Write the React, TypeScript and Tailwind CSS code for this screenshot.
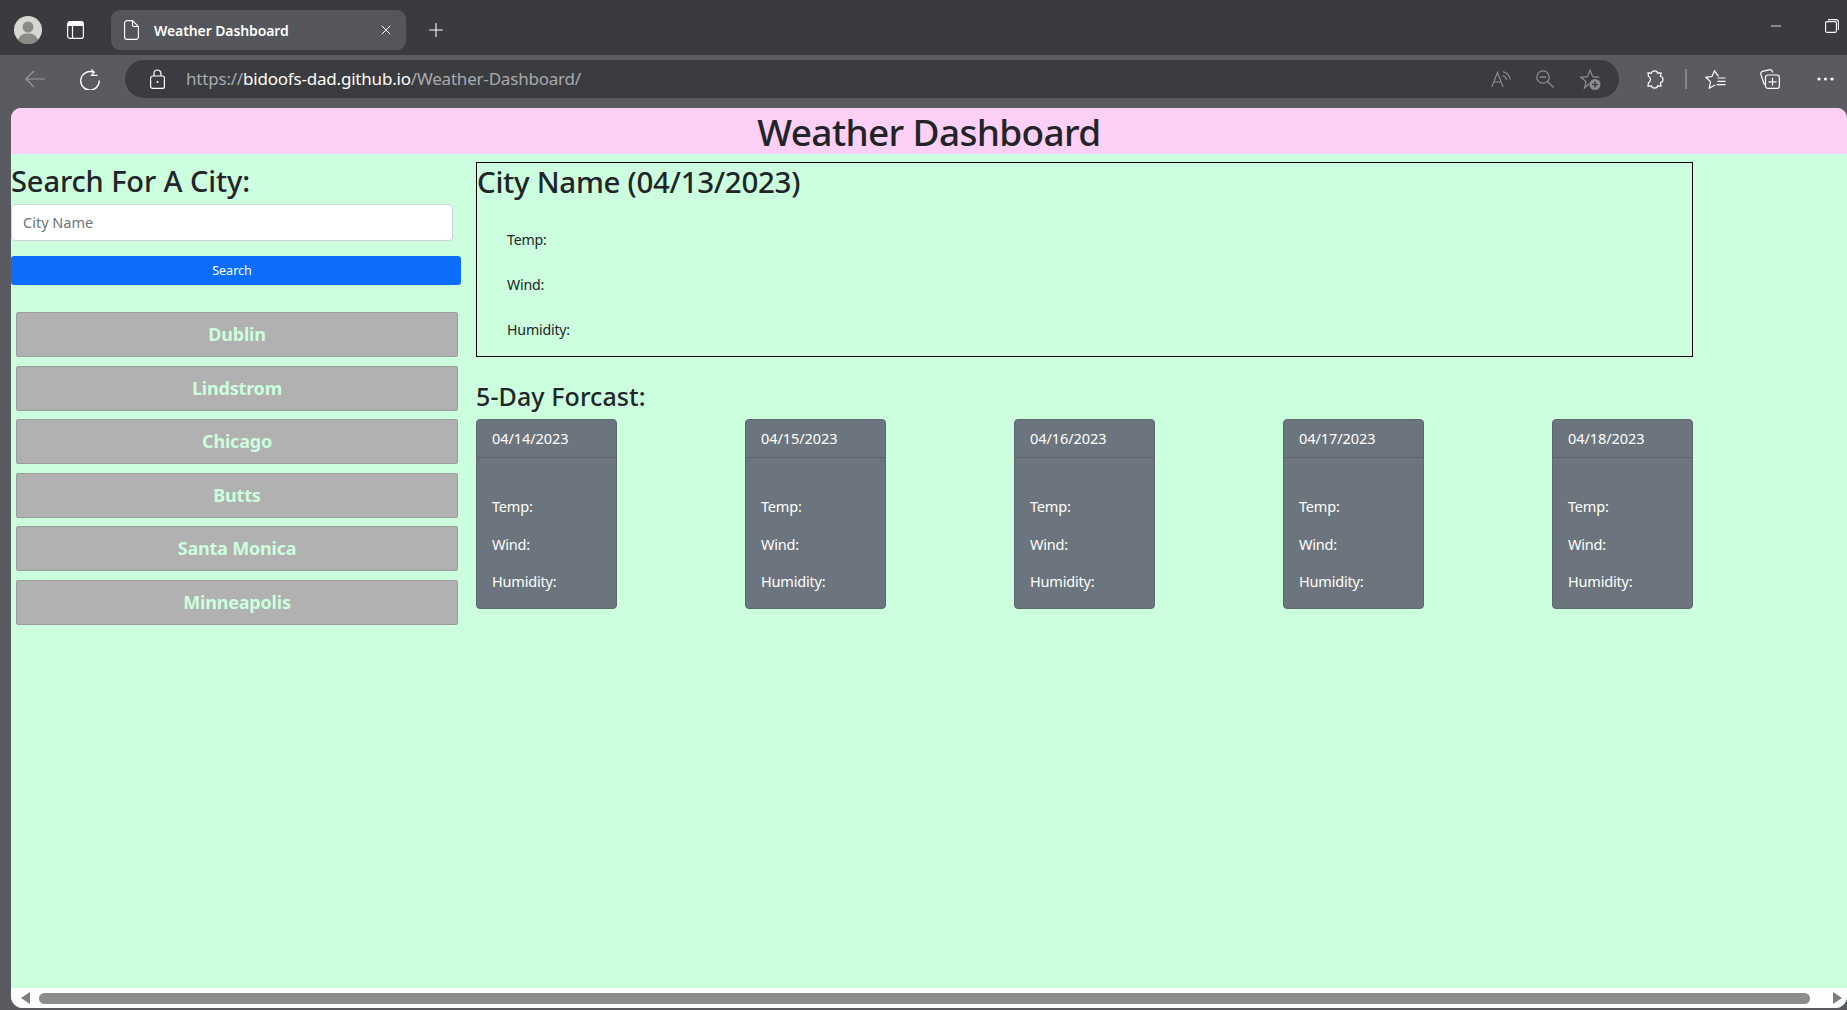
import { Plus, X, Minus } from 'lucide-react'

const cities = ['Dublin', 'Lindstrom', 'Chicago', 'Butts', 'Santa Monica', 'Minneapolis']
const days = ['04/14/2023', '04/15/2023', '04/16/2023', '04/17/2023', '04/18/2023']

const TabBar = () => (
  <div className="h-[55px] bg-[#3a3b3f] flex items-center shrink-0">
    <svg className="ml-[14px] mt-[5px]" width="28" height="28" viewBox="0 0 28 28">
      <circle cx="14" cy="14" r="14" fill="#d8d6d2" />
      <circle cx="14" cy="11" r="5.500" fill="#8c8a87" />
      <path d="M4 24c1.500-5 5.500-6.500 10-6.500S22.500 19 24 24a14 14 0 0 1-20 0z" fill="#8c8a87" />
    </svg>
    <svg className="ml-[25px] mt-[5px]" width="17" height="18" viewBox="0 0 17 18" fill="none" stroke="#fff" strokeWidth="1.200">
      <rect x=".6" y=".6" width="15.800" height="16.800" rx="2.500" />
      <path d="M5.500 5v12.400" />
      <path d="M1 1.500a1 1 0 0 1 1-1h13a1 1 0 0 1 1 1V5H1z" fill="#fff" stroke="none" />
    </svg>
    <div className="ml-[27px] mt-[5px] h-10 w-[295px] rounded-[9px] bg-[#55565b] flex items-center text-white">
      <svg className="ml-[13px]" width="15" height="20" viewBox="0 0 15 20" fill="none" stroke="#fff" strokeWidth="1.100">
        <path d="M3 .6h5.500L14.400 6.500V17a2.400 2.400 0 0 1-2.400 2.400H3A2.400 2.400 0 0 1 .6 17V3A2.400 2.400 0 0 1 3 .6z" />
        <path d="M8.500 .6v4.400a1.500 1.500 0 0 0 1.500 1.500h4.400" />
      </svg>
      <span className="ml-[15px] text-[14px] font-semibold tracking-[-0.1px] grow">Weather Dashboard</span>
      <X size={16} strokeWidth={1.500} className="mr-[12px]" />
    </div>
    <Plus size={22} strokeWidth={1.200} color="#fff" className="ml-[19px] mt-[5px]" />
    <div className="ml-auto flex items-center text-white">
      <Minus size={16} strokeWidth={1.200} className="-mt-[3px] mr-[41px]" />
      <svg className="mr-[8px] -mt-[3px]" width="14" height="14" viewBox="0 0 14 14" fill="none" stroke="#fff" strokeWidth="1.100">
        <rect x=".6" y="2.600" width="10.800" height="10.800" rx="1.500" />
        <path d="M3 .6h8a2.500 2.500 0 0 1 2.400 2.400v8" />
      </svg>
    </div>
  </div>
)

const AddressBar = () => (
  <div className="h-[53px] bg-[#5a5b60] flex items-center shrink-0 text-white pb-[5px]">
    <svg className="ml-[25px]" width="20" height="18" viewBox="0 0 20 18" fill="none" stroke="#9c9da1" strokeWidth="1.200">
      <path d="M.8 9h19M9 1 .8 9 9 17" />
    </svg>
    <svg className="ml-[35px]" width="20" height="21" viewBox="0 0 20 21" fill="none" stroke="#fff" strokeWidth="1.400">
      <path d="M13.500 3.200A9.300 9.300 0 1 0 19.300 11.500" />
      <path d="M11.500 .5l2.800 2.800-2.800 3h6" strokeWidth="1.200" />
    </svg>
    <div className="ml-[25px] w-[1494px] h-[38px] rounded-[19px] bg-[#3b3c40] flex items-center">
      <svg className="ml-[25px]" width="15" height="20" viewBox="0 0 15 20" fill="none" stroke="#fff" strokeWidth="1.200">
        <rect x=".6" y="7" width="13.800" height="12.400" rx="2" />
        <path d="M4 7V4.500a3.500 3.500 0 0 1 7 0V7" />
        <circle cx="7.500" cy="13" r="1" fill="#fff" stroke="none" />
      </svg>
      <div className="ml-[21px] text-[17px] tracking-[-0.2px] text-[#a9aaad] grow whitespace-nowrap">
        https://<span className="text-white">bidoofs-dad.github.io</span>/Weather-Dashboard/
      </div>
      <svg width="20" height="16" viewBox="0 0 20 16" fill="none" stroke="#8b8c90" strokeWidth="1.200">
        <path d="M.8 16 6.500 1.500 12 16M2.800 11h7.500" />
        <path d="M12 .6c3.500 1 6.500 4 7.400 8M11.500 4.500c2 .5 3.800 2.300 4.300 4.500" />
      </svg>
      <svg className="ml-[25px]" width="18" height="18" viewBox="0 0 18 18" fill="none" stroke="#8b8c90" strokeWidth="1.300">
        <circle cx="7" cy="7" r="6.200" />
        <path d="M3.800 7h6.400M11.500 11.500l6 6" />
      </svg>
      <svg className="ml-[26px] mr-[18px]" width="21" height="21" viewBox="0 0 21 21" fill="none" stroke="#8b8c90" strokeWidth="1.200">
        <path d="M9.500 14.500 4.500 19 6 12.500.8 8.300l6.700-.6L10 1l2.600 6.700 6.600.6" />
        <circle cx="15" cy="15.500" r="5.500" fill="#8b8c90" stroke="none" />
        <path d="M15 12.500v6M12 15.500h6" stroke="#3b3c40" strokeWidth="1.400" />
      </svg>
    </div>
    <svg className="ml-[26px]" width="19" height="19" viewBox="0 0 19 19" fill="none" stroke="#fff" strokeWidth="1.200">
      <path d="M6.500 3.200C6.500.2 12.500.2 12.500 3.200L16 3l-.5 3.500c3.300 0 3.300 6 0 6L16 16l-3.500-.2c0 3-6 3-6 0L3 16l.5-3.500c2.500 0 2.500-6 0-6L3 3z" />
    </svg>
    <div className="ml-[21px] w-[2px] h-[20px] bg-[#85868a]" />
    <svg className="ml-[18px]" width="21" height="19" viewBox="0 0 21 19" fill="none" stroke="#fff" strokeWidth="1.200">
      <path d="M13.500 6.300 9.500.8 7 6.500.8 7.300l4.700 4.300-1.200 6.600 5.700-3.200" />
      <path d="M12.500 8h8M12.500 11.300h8M11.500 14.600h9" />
    </svg>
    <svg className="ml-[34px]" width="20" height="20" viewBox="0 0 20 20" fill="none" stroke="#fff" strokeWidth="1.200">
      <path d="M4.500 16 .9 5.500C.5 4 1.200 2.800 2.500 2.400L9 .8c1.500-.3 2.800.4 3.400 1.700l.4 1" />
      <rect x="5.500" y="6" width="13.900" height="13.400" rx="2.500" />
      <path d="M12.500 8.800v8M8.500 12.800h8" />
    </svg>
    <svg className="ml-[37px]" width="17" height="4" viewBox="0 0 17 4" fill="#fff">
      <circle cx="2" cy="2" r="1.600" />
      <circle cx="8.500" cy="2" r="1.600" />
      <circle cx="15" cy="2" r="1.600" />
    </svg>
  </div>
)

const Sidebar = () => (
  <aside className="w-[450px] shrink-0">
    <h3 className="text-[29px] leading-[34px] font-medium text-[#212529] tracking-[-0.1px] mt-[10px]">Search For A City:</h3>
    <div className="mt-[6px] w-[442px] h-[37px] bg-white border border-[#ced4da] rounded-[4px] flex items-center pl-[11px] text-[14.500px] text-[#6c757d]">
      City Name
    </div>
    <button className="mt-[15px] block w-full h-[29px] pt-[2px] bg-[#0d6efd] rounded-[3px] text-white text-[12.500px] text-center pr-[8px]">
      Search
    </button>
    <div className="mt-[27px] ml-[5px] w-[442px] flex flex-col gap-[8.500px]">
      {cities.map(c => (
        <div
          key={c}
          className="h-[45px] bg-[#b1b1b1] border border-[#9c9c9c] rounded-[2px] flex items-center justify-center text-[18px] font-bold text-[#ccffdd] tracking-[-0.2px]"
        >
          {c}
        </div>
      ))}
    </div>
  </aside>
)

const Stat = ({ label }: { label: string }) => <p>{label}</p>

const Main = () => (
  <main className="ml-[15px] w-[1217px] shrink-0 pt-[8px]">
    <section className="h-[195px] border border-black">
      <h2 className="text-[29.500px] leading-[38px] font-medium text-[#212529] tracking-[-0.3px]">City Name (04/13/2023)</h2>
      <div className="pl-[30px] pt-[28px] text-[14.200px] leading-[22px] text-[#212529] tracking-[-0.2px] flex flex-col gap-[23px]">
        <Stat label="Temp:" />
        <Stat label="Wind:" />
        <Stat label="Humidity:" />
      </div>
    </section>
    <h4 className="mt-[24px] text-[25px] leading-[30px] font-medium text-[#212529] tracking-[0.1px]">5-Day Forcast:</h4>
    <div className="mt-[8px] flex justify-between">
      {days.map(d => (
        <div key={d} className="w-[141px] h-[190px] bg-[#6c757d] border border-[#5f666e] rounded-[4px] text-white text-[14.500px] tracking-[-0.2px]">
          <div className="h-[38px] border-b border-[#5b626a] pl-[15px] flex items-center tracking-[-0.08px]">{d}</div>
          <div className="pl-[15px] pt-[38px] leading-[20px] flex flex-col gap-[17.500px]">
            <Stat label="Temp:" />
            <Stat label="Wind:" />
            <Stat label="Humidity:" />
          </div>
        </div>
      ))}
    </div>
  </main>
)

const Scrollbar = () => (
  <div className="h-[20px] bg-[#fdfdfd] flex items-center shrink-0">
    <div className="ml-[10px] w-0 h-0 border-y-[6px] border-y-transparent border-r-[9px] border-r-[#7d7d7d]" />
    <div className="ml-[9px] w-[1771px] h-[11px] rounded-full bg-[#8c8c8c]" />
    <div className="ml-[23px] w-0 h-0 border-y-[6px] border-y-transparent border-l-[9px] border-l-[#7d7d7d]" />
  </div>
)

export default function App() {
  return (
    <div className="w-[1847px] h-[1010px] overflow-hidden flex flex-col bg-[#5a5b60] font-['Noto_Sans','Open_Sans',sans-serif]">
      <TabBar />
      <AddressBar />
      <div className="ml-[11px] mb-[2px] grow flex flex-col rounded-t-[10px] rounded-b-[12px] overflow-hidden bg-[#ccffdd]">
        <header className="h-[46px] bg-[#ffd0f5] flex justify-center shrink-0">
          <h1 className="text-[37px] leading-[44px] pt-[2px] font-medium text-[#212529] tracking-[-0.65px]">Weather Dashboard</h1>
        </header>
        <div className="grow flex">
          <Sidebar />
          <Main />
        </div>
        <Scrollbar />
      </div>
    </div>
  )
}
